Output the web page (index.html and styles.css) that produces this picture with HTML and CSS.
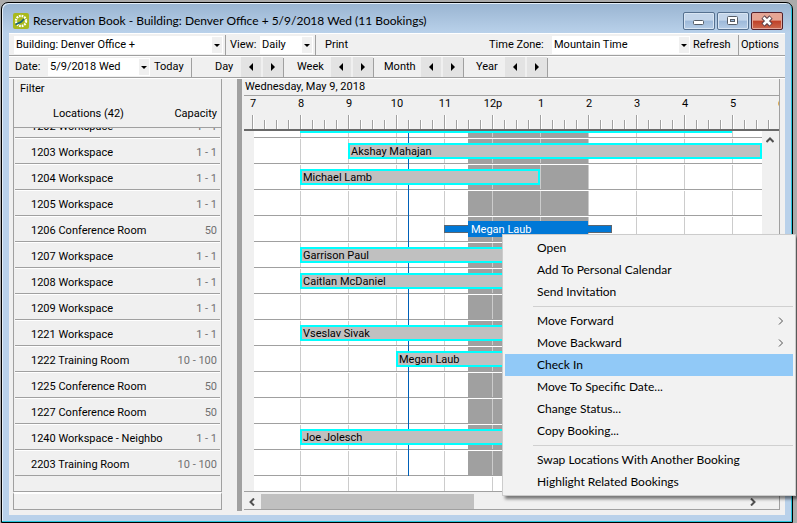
FILE: index.html
```html
<!DOCTYPE html>
<html lang="en">
<head>
<meta charset="utf-8">
<title>Reservation Book</title>
<link rel="stylesheet" href="styles.css">
</head>
<body>
<div class="window">
  <header class="titlebar">
    <svg class="app-icon" viewBox="0 0 16 16" aria-hidden="true">
      <rect width="16" height="16" rx="2" fill="#a9b91d"/>
      <circle cx="8" cy="8" r="5" fill="none" stroke="#fff" stroke-width="2.400" stroke-dasharray="1.7 0.918"/>
      <circle cx="8" cy="8" r="3.400" fill="#a9b91d"/>
      <path d="M2.500 11.500 8 9l3-3" fill="none" stroke="#17627a" stroke-width="1.700"/>
    </svg>
    <h1 class="title">Reservation Book - Building: Denver Office + 5/9/2018 Wed (11 Bookings)</h1>
    <div class="window-buttons">
      <button class="win-btn" aria-label="Minimize"><svg viewBox="0 0 30 16"><rect x="9.500" y="7.500" width="10" height="4" rx="1" fill="#fff" stroke="#555c66"/></svg></button>
      <button class="win-btn" aria-label="Maximize"><svg viewBox="0 0 30 16"><rect x="9.500" y="3.500" width="10" height="8" rx="1" fill="#fff" stroke="#555c66"/><rect x="12.500" y="6.500" width="4" height="2" fill="#9db9d9" stroke="#555c66"/></svg></button>
      <button class="win-btn win-btn--close" aria-label="Close"><svg viewBox="0 0 30 16"><path d="m11 4 8 8m0-8-8 8" stroke="#5a4048" stroke-width="4.600"/><path d="m11.500 4.500 7 7m0-7-7 7" stroke="#fff" stroke-width="2.600"/></svg></button>
    </div>
  </header>

  <div class="client">
    <div class="toolbar">
      <span class="combo combo--building"><select aria-label="Building"><option>Building: Denver Office +</option></select><svg class="caret" viewBox="0 0 10 16"><path d="M2 7h6L5 10z"/></svg></span>
      <span class="divider"></span>
      <label class="view-label" for="view">View:</label>
      <span class="combo combo--view"><select id="view"><option>Daily</option></select><svg class="caret" viewBox="0 0 10 16"><path d="M2 7h6L5 10z"/></svg></span>
      <span class="divider"></span>
      <button class="tool tool--print">Print</button>
      <label class="zone-label" for="zone">Time Zone:</label>
      <span class="combo combo--zone"><select id="zone"><option>Mountain Time</option></select><svg class="caret" viewBox="0 0 10 16"><path d="M2 7h6L5 10z"/></svg></span>
      <button class="tool tool--refresh">Refresh</button>
      <span class="divider"></span>
      <button class="tool tool--options">Options</button>
    </div>
    <div class="toolbar toolbar--date">
      <label for="date">Date:</label>
      <span class="combo combo--date"><select id="date"><option>5/9/2018 Wed</option></select><svg class="caret" viewBox="0 0 10 16"><path d="M2 7h6L5 10z"/></svg></span>
      <button class="tool tool--today">Today</button>
      <span class="divider"></span>
      <div class="stepper stepper--day"><span>Day</span><button aria-label="Previous day"><svg viewBox="0 0 8 8"><path d="M6 0v8L2 4z"/></svg></button><button aria-label="Next day"><svg viewBox="0 0 8 8"><path d="M2 0v8l4-4z"/></svg></button></div>
      <span class="divider"></span>
      <div class="stepper stepper--week"><span>Week</span><button aria-label="Previous week"><svg viewBox="0 0 8 8"><path d="M6 0v8L2 4z"/></svg></button><button aria-label="Next week"><svg viewBox="0 0 8 8"><path d="M2 0v8l4-4z"/></svg></button></div>
      <span class="divider"></span>
      <div class="stepper stepper--month"><span>Month</span><button aria-label="Previous month"><svg viewBox="0 0 8 8"><path d="M6 0v8L2 4z"/></svg></button><button aria-label="Next month"><svg viewBox="0 0 8 8"><path d="M2 0v8l4-4z"/></svg></button></div>
      <span class="divider"></span>
      <div class="stepper stepper--year"><span>Year</span><button aria-label="Previous year"><svg viewBox="0 0 8 8"><path d="M6 0v8L2 4z"/></svg></button><button aria-label="Next year"><svg viewBox="0 0 8 8"><path d="M2 0v8l4-4z"/></svg></button></div>
      <span class="divider"></span>
    </div>

    <main class="book">
      <section class="locations">
        <div class="locations-head">
          <button class="filter">Filter</button>
          <div class="columns"><span>Locations (42)</span><span>Capacity</span></div>
        </div>
        <div class="locations-view">
          <table>
            <tr><td>1202 Workspace</td><td>1 - 1</td></tr>
            <tr><td>1203 Workspace</td><td>1 - 1</td></tr>
            <tr><td>1204 Workspace</td><td>1 - 1</td></tr>
            <tr><td>1205 Workspace</td><td>1 - 1</td></tr>
            <tr><td>1206 Conference Room</td><td>50</td></tr>
            <tr><td>1207 Workspace</td><td>1 - 1</td></tr>
            <tr><td>1208 Workspace</td><td>1 - 1</td></tr>
            <tr><td>1209 Workspace</td><td>1 - 1</td></tr>
            <tr><td>1221 Workspace</td><td>1 - 1</td></tr>
            <tr><td>1222 Training Room</td><td>10 - 100</td></tr>
            <tr><td>1225 Conference Room</td><td>50</td></tr>
            <tr><td>1227 Conference Room</td><td>50</td></tr>
            <tr><td>1240 Workspace - Neighbo</td><td>1 - 1</td></tr>
            <tr><td>2203 Training Room</td><td>10 - 100</td></tr>
          </table>
        </div>
        <div class="locations-foot"></div>
      </section>

      <div class="splitter"></div>

      <section class="schedule">
        <h2 class="day">Wednesday, May 9, 2018</h2>
        <div class="ruler">
          <div class="hours"><span>7</span><span>8</span><span>9</span><span>10</span><span>11</span><span>12p</span><span>1</span><span>2</span><span>3</span><span>4</span><span>5</span><span>6</span></div>
        </div>
        <div class="pane">
          <div class="lanes-view">
            <div class="lanes">
              <div class="now"></div>
              <div class="lane"><div class="bar" style="grid-column: 5 / 41"></div></div>
              <div class="lane"><div class="bar" style="grid-column: 9 / -1">Akshay Mahajan</div></div>
              <div class="lane"><div class="bar" style="grid-column: 5 / 25">Michael Lamb</div></div>
              <div class="lane"></div>
              <div class="lane"><div class="setup" style="grid-column: 17 / 31"></div><div class="bar bar--selected" style="grid-column: 19 / 29">Megan Laub</div></div>
              <div class="lane"><div class="bar" style="grid-column: 5 / 37">Garrison Paul</div></div>
              <div class="lane"><div class="bar" style="grid-column: 5 / 37">Caitlan McDaniel</div></div>
              <div class="lane"></div>
              <div class="lane"><div class="bar" style="grid-column: 5 / 37">Vseslav Sivak</div></div>
              <div class="lane"><div class="bar" style="grid-column: 13 / 37">Megan Laub</div></div>
              <div class="lane"></div>
              <div class="lane"></div>
              <div class="lane"><div class="bar" style="grid-column: 5 / 37">Joe Jolesch</div></div>
              <div class="lane"></div>
            </div>
            <div class="lane lane--rest"></div>
          </div>
          <div class="vscroll"><svg viewBox="0 0 8 6"><path d="M0.500 5 4 1.500 7.500 5"/></svg></div>
        </div>
        <div class="hscroll">
          <svg viewBox="0 0 6 8"><path d="M5 0.500 1.500 4 5 7.500"/></svg>
          <div class="track"><div class="thumb"></div></div>
          <svg viewBox="0 0 6 8"><path d="M1 0.500 4.500 4 1 7.500"/></svg>
        </div>
      </section>
    </main>
  </div>
</div>

<div class="menu" role="menu">
  <button role="menuitem">Open</button>
  <button role="menuitem">Add To Personal Calendar</button>
  <button role="menuitem">Send Invitation</button>
  <hr>
  <button role="menuitem">Move Forward<svg viewBox="0 0 6 8"><path d="M1 0.500 4.500 4 1 7.500"/></svg></button>
  <button role="menuitem">Move Backward<svg viewBox="0 0 6 8"><path d="M1 0.500 4.500 4 1 7.500"/></svg></button>
  <button role="menuitem" class="active">Check In</button>
  <button role="menuitem">Move To Specific Date...</button>
  <button role="menuitem">Change Status...</button>
  <button role="menuitem">Copy Booking...</button>
  <hr>
  <button role="menuitem">Swap Locations With Another Booking</button>
  <button role="menuitem">Highlight Related Bookings</button>
</div>
</body>
</html>
```
FILE: styles.css
```css
:root {
  --face: #f0f0f0;
  --line: #a0a0a0;
  --ui: Lato, "Liberation Sans", sans-serif;
  --small: Roboto, "Liberation Sans", sans-serif;
}
* { box-sizing: border-box; }
body {
  margin: 0;
  min-height: 100vh;
  padding: 2px 4px 0 1px;
  display: flex;
  background: #ababab;
  font: 11px/16px var(--small);
  color: #000;
}
button, select {
  margin: 0;
  padding: 0;
  border: 0;
  background: none;
  font: inherit;
  color: inherit;
  text-align: left;
}

.window {
  flex: 1;
  min-width: 0;
  display: flex;
  flex-direction: column;
  padding: 0 7px 7px;
  border: 1px solid #000;
  box-shadow: inset -1px -1px #27c5dc, inset 1px 1px #e4eef8;
  border-radius: 7px 7px 0 0;
  background: linear-gradient(#99b4d1, #b9d1ea 30px);
}
.titlebar {
  display: flex;
  align-items: center;
  height: 30px;
  padding: 6px 2px 0;
}
.app-icon { width: 16px; height: 16px; margin: 0 4px 0 2px; }
.title { flex: 1; margin: 0; font: 12px/16px var(--ui); }
.window-buttons { display: flex; gap: 2px; }
.win-btn {
  display: flex;
  width: 32px;
  height: 18px;
  border: 1px solid #55708f;
  border-radius: 2px;
  background: linear-gradient(#c3d5ea 45%, #9db9d9 50%, #b5cce6);
  box-shadow: inset 0 0 0 1px #d8e5f3;
}
.win-btn svg { width: 30px; height: 16px; }
.win-btn--close {
  border-color: #54202a;
  background: linear-gradient(#e6a594 45%, #bf4028 50%, #cc6a50);
  box-shadow: inset 0 0 0 1px #e3a699;
}

.client { flex: 1; display: flex; flex-direction: column; background: var(--face); }
.toolbar {
  display: flex;
  align-items: center;
  height: 22px;
  padding-left: 5px;
  border-top: 1px solid #fff;
  border-bottom: 1px solid var(--line);
}
.toolbar:first-child { height: 23px; }
.divider { align-self: stretch; width: 1px; margin: 1px 2px 0; background: var(--line); }
.combo { display: grid; height: 18px; background: #fff; }
.combo select { grid-area: 1 / 1; width: 100%; padding-left: 2px; appearance: none; }
.caret { grid-area: 1 / 1; justify-self: end; align-self: center; width: 10px; height: 16px; background: var(--face); pointer-events: none; margin-right: 1px; }
.combo--building { width: 209px; }
.view-label { width: 30px; margin-left: 2px; }
.combo--view { width: 53px; }
.tool--print { margin-left: 7px; }
.zone-label { margin-left: auto; width: 63px; }
.combo--zone { width: 138px; }
.tool--refresh { width: 43px; margin-left: 3px; }
.tool--options { width: 44px; }
.toolbar--date { padding-left: 6px; }
.toolbar--date label { width: 33px; }
.combo--date { width: 102px; }
.tool--today { margin-left: 4px; width: 35px; }
.stepper { display: flex; align-items: center; align-self: stretch; gap: 2px; }
.stepper button { display: flex; align-items: center; justify-content: center; align-self: stretch; width: 20px; background: #e3e3e3; }
.stepper svg { width: 8px; height: 8px; }
.stepper + .divider { margin-left: 0; }
.stepper--day span { width: 24px; margin-left: 21px; }
.stepper--week span { width: 32px; margin-left: 11px; }
.stepper--month span { width: 35px; margin-left: 8px; }
.stepper--year span { width: 27px; margin-left: 10px; }

.book {
  flex: 1;
  display: grid;
  grid-template-columns: 209px 5px minmax(0, 1fr);
  column-gap: 15px;
  padding: 0 5px 4px 4px;
  border-top: 1px solid #fff;
}
.locations { display: flex; flex-direction: column; }
.locations-head {
  height: 49px;
  padding: 2px 4px 0 6px;
  border: solid var(--line);
  border-width: 0 1px 1px;
}
.filter { display: block; }
.columns { display: flex; justify-content: space-between; padding: 9px 0 0 33px; }
.locations-view {
  flex: 1;
  overflow: hidden;
  padding: 0 1px;
  border: solid var(--line);
  border-width: 0 1px 1px;
}
.locations table {
  width: 100%;
  margin-top: -16px;
  border-collapse: separate;
  border-spacing: 0;
  line-height: 20px;
}
.locations td {
  height: 26px;
  padding: 4px 0 0 16px;
  border-top: 1px solid #fff;
  border-bottom: 1px solid var(--line);
  white-space: nowrap;
}
.locations td + td { padding: 4px 3px 0 0; text-align: right; color: #707070; }
.locations-foot {
  height: 18px;
  margin-bottom: 1px;
  border: solid var(--line);
  border-width: 2px 1px 1px;
  border-top-color: #fff;
}
.splitter { background: var(--line); }

.schedule {
  display: flex;
  flex-direction: column;
  margin: 0 0 1px -13px;
  border-right: 1px solid var(--line);
}
.day { margin: 0; height: 17px; padding-left: 1px; font: 11px/16px var(--small); border-bottom: 1px solid var(--line); }
.ruler {
  height: 35px;
  overflow: hidden;
  border-bottom: 2px solid #696969;
  background:
    repeating-linear-gradient(to right, var(--line) 0 1px, #fff 1px 2px, transparent 2px 48px) 8px 100% / 100% 14px no-repeat,
    repeating-linear-gradient(to right, var(--line) 0 1px, #fff 1px 2px, transparent 2px 12px) 8px 100% / 100% 9px no-repeat;
}
.hours { display: grid; grid-template-columns: repeat(12, 48px); margin-left: -15px; text-align: center; }
.pane { flex: 1; display: flex; border-bottom: 1px solid var(--line); }
.lanes-view { flex: 1; display: flex; flex-direction: column; overflow: hidden; margin-left: 10px; background: #fff; }
.lanes { position: relative; margin-top: -19px; }
.lane {
  display: grid;
  grid-template-columns: 10px repeat(41, 12px) minmax(0, 1fr);
  align-items: center;
  height: 26px;
  border-top: 1px solid #fff;
  border-bottom: 1px solid var(--line);
  background:
    repeating-linear-gradient(to right, transparent 0 46px, #ccc 46px 47px, transparent 47px 48px) padding-box,
    linear-gradient(to right, transparent 214px, var(--line) 214px 334px, transparent 334px) padding-box;
}
.lane--rest {
  flex: 1;
  height: auto;
  border-bottom: 0;
  background: repeating-linear-gradient(to right, transparent 0 46px, #ccc 46px 47px, transparent 47px 48px) padding-box;
}
.bar {
  position: relative;
  grid-row: 1;
  height: 16px;
  padding-left: 1px;
  overflow: hidden;
  border: 2px solid #0ff;
  background: #c0c0c0;
  line-height: 14px;
  white-space: nowrap;
}
.bar--selected { border-color: #0078d7; background: #0078d7; color: #fff; }
.setup { position: relative; grid-row: 1; height: 8px; border: 1px solid #5c6670; background: #0078d7; }
.now { position: absolute; top: 0; bottom: 0; left: 154px; width: 1px; background: #0060b8; }
.vscroll { width: 17px; padding: 6px 0 0 4px; }
.vscroll svg { display: block; width: 8px; height: 6px; }
.vscroll path, .hscroll path, .menu path { fill: none; stroke: #505050; stroke-width: 2; }
.hscroll {
  display: flex;
  align-items: center;
  height: 18px;
  padding: 2px 23px 0 5px;
  border-bottom: 1px solid var(--line);
}
.hscroll svg { width: 6px; height: 8px; }
.track { flex: 1; align-self: stretch; margin: 0 6px; }
.thumb { width: 44%; height: 100%; background: #c0c0c0; }

.menu {
  position: absolute;
  left: 502px;
  top: 234px;
  width: 294px;
  padding: 2px;
  border: 1px solid #ccc;
  background: #f2f2f2;
  box-shadow: 3px 3px 3px rgba(0, 0, 0, .5);
  font: 12px/22px var(--ui);
}
.menu button { display: flex; align-items: center; justify-content: space-between; width: 100%; height: 22px; padding: 0 9px 0 32px; }
.menu .active { background: #91c9f7; }
.menu svg { width: 6px; height: 8px; }
.menu path { stroke-width: 1; }
.menu hr { height: 1px; margin: 3px 0 3px 28px; border: 0; background: #d0d0d0; }
```
